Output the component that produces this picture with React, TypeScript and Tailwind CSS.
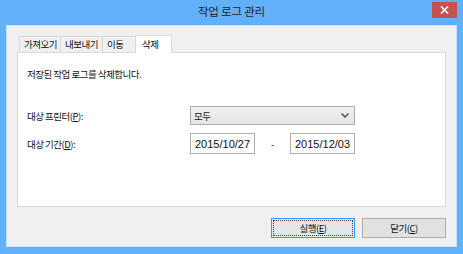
import React from 'react'

const font = { fontFamily: '"Noto Sans CJK KR", "Noto Sans", sans-serif' }
const digits = { fontFamily: '"Liberation Sans", "Noto Sans CJK KR", sans-serif' }

function Tab({ label, width, active }: { label: string; width: string; active?: boolean }) {
  return active ? (
    <div className={'relative -ml-[2px] -mb-px z-10 h-[18px] border border-b-0 border-[#d9d9d9] bg-white pl-[6px] pt-[2px] leading-[12px] ' + width}>
      {label}
    </div>
  ) : (
    <div className={'h-[16px] border border-b-0 border-r-0 border-[#d9d9d9] bg-[#f0f0f0] pl-[4px] leading-[15px] ' + width}>
      {label}
    </div>
  )
}

function Button({ children, primary }: { children: React.ReactNode; primary?: boolean }) {
  return primary ? (
    <div className="flex h-[20px] w-[84px] border border-[#3399ff] bg-[#e5e5e5] p-[1px]">
      <div className="flex h-full w-full items-center justify-center border border-dotted border-[#444]">
        {children}
      </div>
    </div>
  ) : (
    <div className="flex h-[20px] w-[84px] items-center justify-center border border-[#adadad] bg-[#e1e1e1]">
      {children}
    </div>
  )
}

export default function App() {
  return (
    <div className="flex h-[254px] w-[463px] flex-col bg-[#62b0f7] text-[9.5px] tracking-[-0.5px] text-[#111]" style={font}>
      {/* Title bar */}
      <div className="relative flex h-[25px] items-center justify-center">
        <span className="pb-px text-[11.5px] tracking-[-0.2px] text-[#1e1e1e]">작업 로그 관리</span>
        <div className="absolute right-[6px] top-[2px] flex h-[16px] w-[25px] items-center justify-center bg-[#c75050]">
          <svg width="9" height="8" viewBox="0 0 9 8">
            <path d="M1 0.5 L8 7.5 M8 0.5 L1 7.5" stroke="white" strokeWidth="1.6" />
          </svg>
        </div>
      </div>

      {/* Client area */}
      <div className="mx-[6px] mb-[7px] flex flex-1 flex-col border border-[#c9e2fa] bg-[#f0f0f0] px-[10px] pt-[9px]">
        {/* Tabs */}
        <div className="flex items-end pl-[2px]">
          <Tab label="가져오기" width="w-[41px]" />
          <Tab label="내보내기" width="w-[42px]" />
          <Tab label="이동" width="w-[35px] border-r" />
          <Tab label="삭제" width="w-[37px]" active />
        </div>
        <div className="h-[155px] border border-[#d9d9d9] bg-white pl-[9px] pt-[14px]">
          <div>저장된 작업 로그를 삭제합니다.</div>

          <div className="mt-[25px] flex items-center">
            <div className="w-[163px]">
              대상 프린터(<span className="underline">P</span>):
            </div>
            <div className="flex h-[19px] w-[165px] items-center justify-between border border-[#acacac] bg-gradient-to-b from-[#f0f0f0] to-[#e5e5e5] pl-[3px] pr-[5px]">
              <span>모두</span>
              <svg width="8" height="5" viewBox="0 0 8 5">
                <path d="M0.5 0.5 L4 4 L7.5 0.5" stroke="#444" strokeWidth="1.3" fill="none" />
              </svg>
            </div>
          </div>

          <div className="mt-[8px] flex items-center">
            <div className="w-[163px]">
              대상 기간(<span className="underline">D</span>):
            </div>
            <div className="flex h-[21px] w-[65px] items-center border border-[#abadb3] pl-[4px] text-[11px] tracking-normal" style={digits}>
              2015/10/27
            </div>
            <div className="w-[35px] text-center">-</div>
            <div className="flex h-[21px] w-[65px] items-center border border-[#abadb3] pl-[4px] text-[11px] tracking-normal" style={digits}>
              2015/12/03
            </div>
          </div>
        </div>

        {/* Buttons */}
        <div className="mt-[11px] flex justify-end gap-[7px]">
          <Button primary>
            <span>
              실행(<span className="underline">E</span>)
            </span>
          </Button>
          <Button>
            <span>
              닫기(<span className="underline">C</span>)
            </span>
          </Button>
        </div>
      </div>
    </div>
  )
}
